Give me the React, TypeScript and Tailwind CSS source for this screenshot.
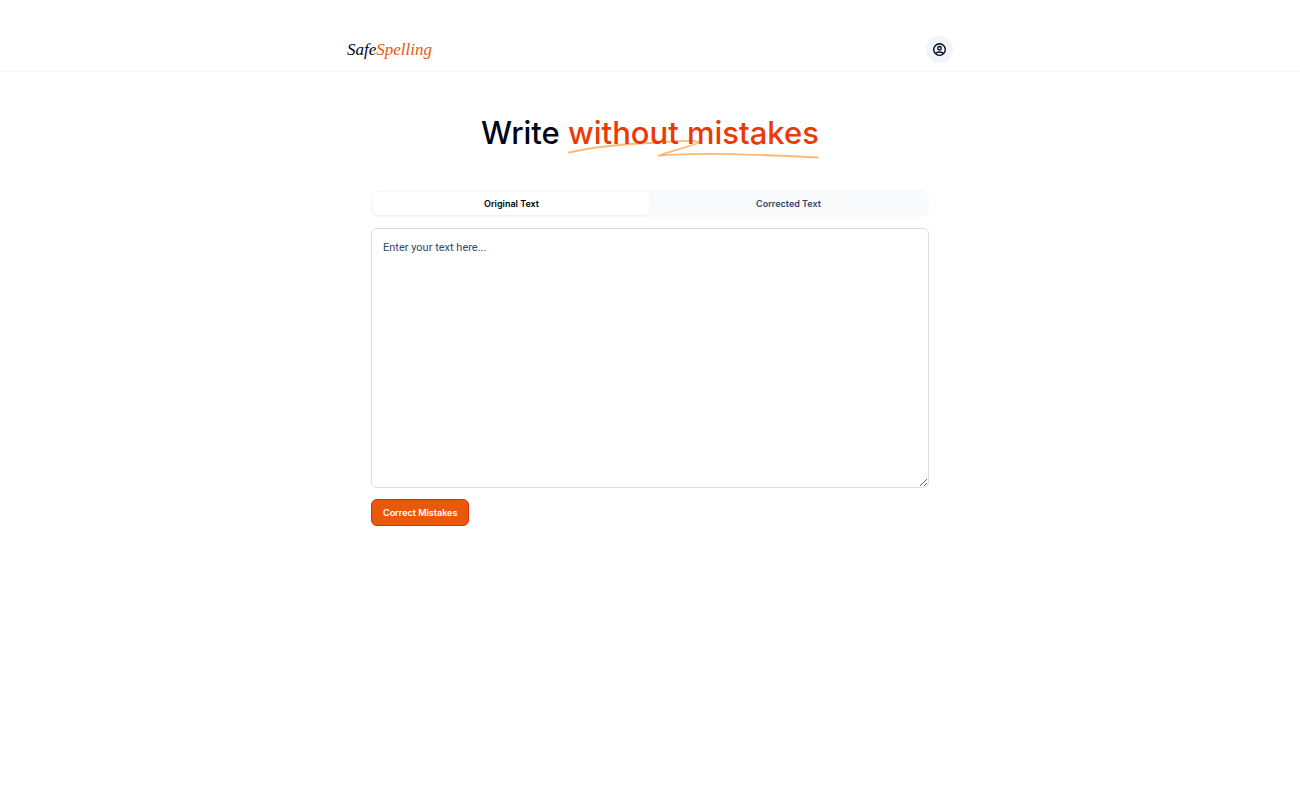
import { useState } from "react";

type Tab = "original" | "corrected";

const tabs: { id: Tab; label: string }[] = [
  { id: "original", label: "Original Text" },
  { id: "corrected", label: "Corrected Text" },
];

function AccountIcon() {
  return (
    <svg
      viewBox="0 0 24 24"
      className="size-[15px]"
      fill="none"
      stroke="currentColor"
      strokeWidth="2.2"
      strokeLinecap="round"
      strokeLinejoin="round"
      aria-hidden="true"
    >
      <circle cx="12" cy="12" r="9.300" />
      <circle cx="12" cy="10" r="2.800" />
      <path d="M5.800 18.200C7.200 16.300 9.300 16 12 16S16.800 16.300 18.200 18.200" />
    </svg>
  );
}

function Header() {
  return (
    <header className="border-b border-slate-100 pt-9 pb-2">
      <div className="mx-auto flex w-full max-w-[606px] items-center justify-between">
        <a
          href="/"
          className="font-['Liberation_Serif',cursive] text-[17px] leading-6 text-slate-950 italic"
        >
          Safe<span className="text-[#ea580c]">Spelling</span>
        </a>
        <button
          type="button"
          aria-label="Account"
          className="flex size-[27px] items-center justify-center rounded-full bg-slate-100 text-slate-950"
        >
          <AccountIcon />
        </button>
      </div>
    </header>
  );
}

function Underline() {
  return (
    <svg
      viewBox="0 0 252 20"
      preserveAspectRatio="none"
      className="absolute top-full left-0 -mt-4 h-5 w-full text-[#fdba74]"
      fill="none"
      stroke="currentColor"
      strokeWidth="1.8"
      strokeLinecap="round"
      strokeLinejoin="round"
      aria-hidden="true"
    >
      <path d="M1 13.500C25 8 57 5 90 3.500C108 2 128 1.500 131 3C133 5 103 12 91 16.500C135 13 190 15.500 251 18.500" />
    </svg>
  );
}

export default function App() {
  const [tab, setTab] = useState<Tab>("original");
  const [text, setText] = useState("");

  return (
    <div className="min-h-screen bg-white font-['Inter',sans-serif] text-slate-950">
      <Header />
      <main className="mx-auto flex w-full max-w-[558px] flex-col items-start pt-[39px]">
        <h1 className="self-center text-[31px] leading-11 font-medium">
          Write{" "}
          <span className="relative inline-block text-[#e93a08]">
            <Underline />
            <span className="relative">without mistakes</span>
          </span>
        </h1>

        <div role="tablist" className="mt-[35px] grid w-full grid-cols-2 rounded-lg bg-slate-50 p-[2px]">
          {tabs.map(({ id, label }) => (
            <button
              key={id}
              type="button"
              role="tab"
              aria-selected={tab === id}
              onClick={() => setTab(id)}
              className={
                tab === id
                  ? "h-[23px] rounded-md bg-white text-[9px] font-semibold text-black shadow-xs"
                  : "h-[23px] rounded-md text-[9px] font-semibold text-[#334766]"
              }
            >
              {label}
            </button>
          ))}
        </div>

        <textarea
          aria-label="Text to correct"
          placeholder="Enter your text here..."
          value={text}
          onChange={(event) => setText(event.target.value)}
          className="mt-[11px] h-[260px] w-full resize rounded-md border border-[#d5e0ea] bg-white p-[11px] font-['Roboto',sans-serif] text-[11px] leading-4 placeholder:text-[#334766]"
        />

        <button
          type="button"
          className="mt-[11px] h-[27px] rounded-md border border-[#dc2a0a] bg-[#ea580c] px-[11px] text-[9px] font-semibold text-white"
        >
          Correct Mistakes
        </button>
      </main>
    </div>
  );
}
